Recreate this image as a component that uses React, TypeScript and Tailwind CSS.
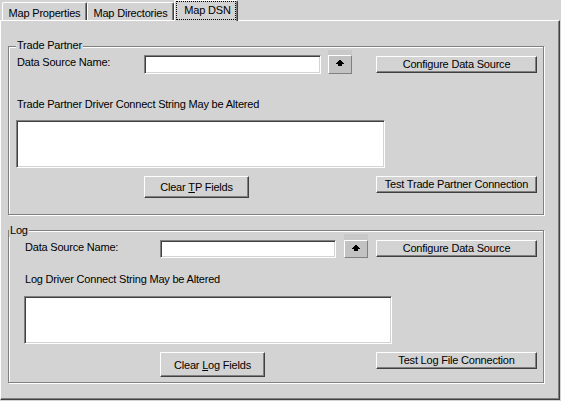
import React from 'react';

const raised =
  'border border-t-white border-l-white border-r-[#404040] border-b-[#404040] shadow-[inset_-1px_-1px_0_#808080]';
const sunken =
  'border border-t-[#808080] border-l-[#808080] border-r-white border-b-white shadow-[inset_1px_1px_0_#404040,inset_-1px_-1px_0_#d3d3d3] bg-white';

function Button({ className, children }: { className: string; children: React.ReactNode }) {
  return (
    <div className={`${raised} ${className} flex items-center justify-center whitespace-nowrap bg-[#d3d3d3]`}>
      {children}
    </div>
  );
}

function ArrowButton({ strip, height }: { strip: string; height: string }) {
  return (
    <div className="flex w-[24px] flex-col">
      <div className={`${strip} bg-[#c8c8c8]`} />
      <div
        className={`${height} flex items-center justify-center border border-t-white border-l-white border-r-[#808080] border-b-[#808080] bg-[#c2c2c2] pb-[3px]`}
      >
        <svg width="10" height="6" viewBox="0 0 10 6" shapeRendering="crispEdges">
          <polygon points="5,0 10,4 7,4 7,6 3,6 3,4 0,4" fill="#000" />
        </svg>
      </div>
    </div>
  );
}

function Tab({ label, width }: { label: string; width: string }) {
  return (
    <div
      className={`${width} h-[18px] rounded-t-[2px] border-t border-l border-r border-t-white border-l-white border-r-[#404040] pt-[4px] text-center whitespace-nowrap shadow-[inset_-1px_0_0_#808080]`}
    >
      {label}
    </div>
  );
}

export default function App() {
  return (
    <div className="h-[401px] w-[561px] overflow-hidden bg-[#d3d3d3] font-['Liberation_Sans',Arial,sans-serif] text-[11px] leading-[13px] tracking-[-0.2px] text-black">
      <div className="relative z-10 flex h-[20px] items-end pl-[2px]">
        <Tab label="Map Properties" width="w-[85px]" />
        <Tab label="Map Directories" width="w-[87px]" />
        <div className="-mb-px h-[21px] w-[64px] rounded-t-[2px] border-t border-l border-r border-t-white border-l-white border-r-[#404040] bg-[#d3d3d3] px-[1px] shadow-[inset_-1px_0_0_#808080]">
          <div className="flex h-[19px] justify-center border border-dotted border-black pt-[2px] pl-[3px] whitespace-nowrap">
            Map DSN
          </div>
        </div>
      </div>

      <div className="h-[380px] w-[560px] border border-t-white border-l-white border-r-[#404040] border-b-[#404040] pt-[25px] pl-[7px] shadow-[inset_-1px_-1px_0_#808080]">
        {/* Trade Partner */}
        <div className="relative h-[169px] w-[536px] border border-[#808080] shadow-[inset_1px_1px_0_#fff,1px_1px_0_#fff]">
          <span className="absolute top-[-8px] left-[7px] bg-[#d3d3d3] px-[1px] whitespace-nowrap">Trade Partner</span>
          <div className="mt-[3px] flex items-start">
            <div className="mt-[6px] ml-[8px] w-[127px] whitespace-nowrap">Data Source Name:</div>
            <div className={`${sunken} mt-[5px] h-[19px] w-[177px]`} />
            <div className="ml-[7px]">
              <ArrowButton strip="h-[5px]" height="h-[19px]" />
            </div>
            <Button className="mt-[6px] ml-[24px] h-[17px] w-[161px]">Configure Data Source</Button>
          </div>
          <div className="mt-[24px] ml-[8px] whitespace-nowrap">Trade Partner Driver Connect String May be Altered</div>
          <div className={`${sunken} mt-[9px] ml-[7px] h-[48px] w-[369px]`} />
          <div className="mt-[8px] flex items-start">
            <Button className="ml-[135px] h-[22px] w-[105px] pt-[1px]">
              Clear&nbsp;<span className="underline">T</span>P Fields
            </Button>
            <Button className="ml-[127px] h-[17px] w-[161px]">Test Trade Partner Connection</Button>
          </div>
        </div>

        {/* Log */}
        <div className="relative mt-[15px] h-[153px] w-[536px] border border-[#808080] shadow-[inset_1px_1px_0_#fff,1px_1px_0_#fff]">
          <span className="absolute top-[-7px] left-0 bg-[#d3d3d3] px-[1px]">Log</span>
          <div className="mt-[3px] flex items-start">
            <div className="mt-[7px] ml-[16px] w-[135px] whitespace-nowrap">Data Source Name:</div>
            <div className={`${sunken} mt-[6px] h-[18px] w-[176px]`} />
            <div className="ml-[8px]">
              <ArrowButton strip="h-[6px]" height="h-[18px]" />
            </div>
            <Button className="mt-[6px] ml-[8px] h-[17px] w-[161px]">Configure Data Source</Button>
          </div>
          <div className="mt-[15px] ml-[16px] whitespace-nowrap">Log Driver Connect String May be Altered</div>
          <div className={`${sunken} mt-[10px] ml-[15px] h-[48px] w-[368px]`} />
          <div className="mt-[8px] flex items-start">
            <Button className="ml-[151px] h-[25px] w-[105px] pt-[1px]">
              Clear&nbsp;<span className="underline">L</span>og Fields
            </Button>
            <Button className="ml-[111px] h-[17px] w-[161px]">Test Log File Connection</Button>
          </div>
        </div>
      </div>
    </div>
  );
}
